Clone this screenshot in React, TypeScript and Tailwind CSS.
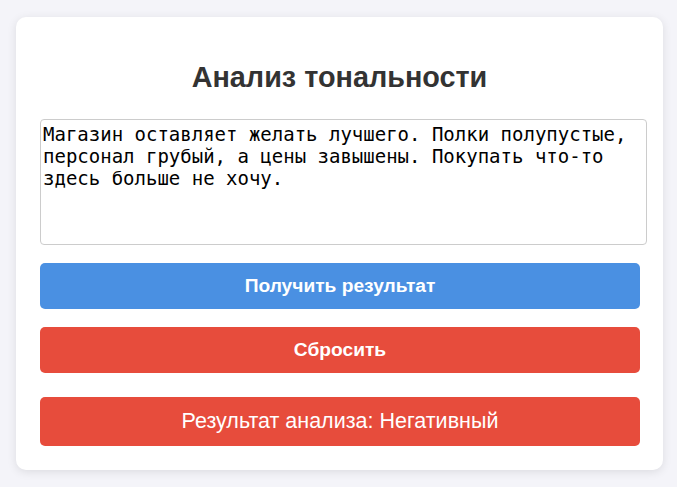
import { useState } from 'react'

const initialText =
  'Магазин оставляет желать лучшего. Полки полупустые, персонал грубый, а цены завышены. Покупать что-то здесь больше не хочу.'

export default function App() {
  const [text, setText] = useState(initialText)
  const [result, setResult] = useState<string | null>('Негативный')

  return (
    <div className="min-h-[487px] bg-[#f4f4f9] pt-[17px] pb-[16px] font-['Liberation_Sans',Arial,sans-serif] text-[#333]">
      <div className="ml-[16px] w-[647px] rounded-[10px] bg-white p-[24px] shadow-[0_2px_10px_rgba(0,0,0,0.1)]">
        <h1 className="mt-[20px] text-center text-[28.8px] font-bold leading-[32px] text-[#333]">Анализ тональности</h1>

        <textarea
          className="mt-[26px] block h-[126px] w-[607px] resize-none rounded-[4px] border border-[#ccc] px-[2px] pt-[3px] font-['DejaVu_Sans_Mono',monospace] text-[19px] leading-[22px] text-black outline-none"
          value={text}
          onChange={(e) => setText(e.target.value)}
        />

        <button
          className="mt-[18px] flex h-[46px] w-[600px] items-center justify-center rounded-[5px] bg-[#4a90e2] text-[19.2px] font-bold text-white"
          onClick={() => setResult('Негативный')}
        >
          Получить результат
        </button>

        <button
          className="mt-[18px] flex h-[46px] w-[600px] items-center justify-center rounded-[5px] bg-[#e74c3c] text-[19.2px] font-bold text-white"
          onClick={() => {
            setText('')
            setResult(null)
          }}
        >
          Сбросить
        </button>

        {result && (
          <div className="mt-[24px] flex h-[49px] w-[600px] items-center justify-center rounded-[5px] bg-[#e74c3c] text-[21.5px] text-white">
            Результат анализа: {result}
          </div>
        )}
      </div>
    </div>
  )
}
